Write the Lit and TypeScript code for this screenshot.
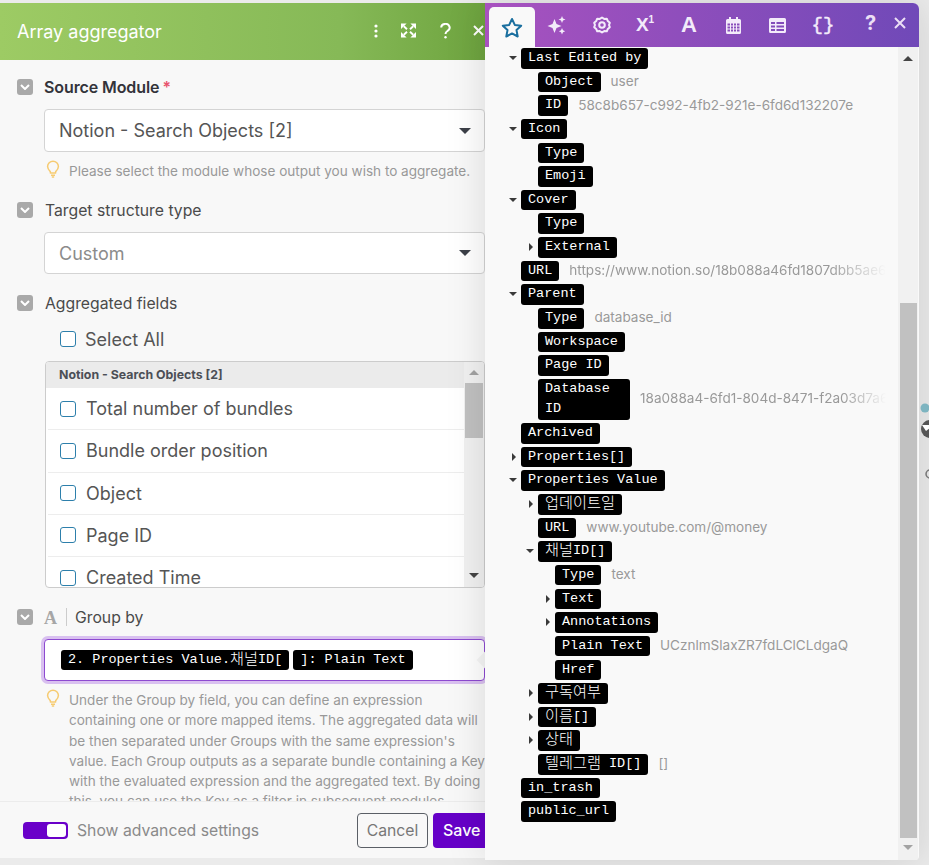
import { LitElement, html, css, nothing } from "lit";
import { customElement } from "lit/decorators.js";

type Node = { l: number; t: string; a?: "d" | "r"; v?: string; fade?: boolean; wrap?: boolean };

const TREE: Node[] = [
  { l: 0, t: "Last Edited by", a: "d" },
  { l: 1, t: "Object", v: "user" },
  { l: 1, t: "ID", v: "58c8b657-c992-4fb2-921e-6fd6d132207e" },
  { l: 0, t: "Icon", a: "d" },
  { l: 1, t: "Type" },
  { l: 1, t: "Emoji" },
  { l: 0, t: "Cover", a: "d" },
  { l: 1, t: "Type" },
  { l: 1, t: "External", a: "r" },
  { l: 0, t: "URL", v: "https://www.notion.so/18b088a46fd1807dbb5ae6f0a1c2d3e4", fade: true },
  { l: 0, t: "Parent", a: "d" },
  { l: 1, t: "Type", v: "database_id" },
  { l: 1, t: "Workspace" },
  { l: 1, t: "Page ID" },
  { l: 1, t: "Database ID", v: "18a088a4-6fd1-804d-8471-f2a03d7a6c1e9b20", fade: true, wrap: true },
  { l: 0, t: "Archived" },
  { l: 0, t: "Properties[]", a: "r" },
  { l: 0, t: "Properties Value", a: "d" },
  { l: 1, t: "업데이트일", a: "r" },
  { l: 1, t: "URL", v: "www.youtube.com/@money" },
  { l: 1, t: "채널ID[]", a: "d" },
  { l: 2, t: "Type", v: "text" },
  { l: 2, t: "Text", a: "r" },
  { l: 2, t: "Annotations", a: "r" },
  { l: 2, t: "Plain Text", v: "UCznlmSlaxZR7fdLClCLdgaQ" },
  { l: 2, t: "Href" },
  { l: 1, t: "구독여부", a: "r" },
  { l: 1, t: "이름[]", a: "r" },
  { l: 1, t: "상태", a: "r" },
  { l: 1, t: "텔레그램 ID[]", v: "[]" },
  { l: 0, t: "in_trash" },
  { l: 0, t: "public_url" },
];

const FIELDS = ["Total number of bundles", "Bundle order position", "Object", "Page ID", "Created Time"];

const chevron = html`<span class="tog"><svg width="10" height="6" viewBox="0 0 10 6"><path d="M1 1l4 4 4-4" fill="none" stroke="#fff" stroke-width="2"/></svg></span>`;
const bulb = html`<svg class="bulb" width="14" height="18" viewBox="0 0 14 18" fill="none" stroke="#f6cb72" stroke-width="1.5"><path d="M4.3 11.6C3 10.4 1.6 9 1.6 6.6a5.4 5.4 0 0 1 10.8 0c0 2.4-1.4 3.8-2.7 5l-.2 1.4H4.500z"/><path d="M5 15.2h4M5.8 17h2.4"/></svg>`;

const pillText = (t: string) =>
  t.split(/([\uAC00-\uD7A3]+)/).map((part, i) => (i % 2 ? html`<span class="ko">${part}</span>` : part));

@customElement("app-root")
export class AppRoot extends LitElement {
  static styles = css`
    :host {
      display: flex;
      position: relative;
      width: 929px;
      height: 865px;
      box-sizing: border-box;
      padding-top: 3px;
      overflow: hidden;
      background: #ebebeb;
      font-family: Inter, "Noto Sans CJK KR", sans-serif;
    }
    .left {
      width: 485px;
      height: 855px;
      flex: none;
      display: flex;
      flex-direction: column;
      overflow: hidden;
      background: #f8f8f8;
    }
    .lhead {
      height: 57px;
      flex: none;
      display: flex;
      align-items: center;
      padding-left: 17px;
      color: #fff;
      font-size: 18px;
      background: linear-gradient(90deg, #9dcb64, #86b957 70%, #6ea43f);
    }
    .lhead .ttl { flex: 1; }
    .lhead svg { flex: none; display: block; margin-top: -2px; }
    .hi1 { margin-right: 23px; }
    .hi2 { margin-right: 24px; }
    .hi3 { margin-right: 22px; }
    .body {
      flex: 1;
      min-height: 0;
      overflow: hidden;
      padding: 17px 0 0 17px;
    }
    .lab {
      display: flex;
      align-items: center;
      height: 20px;
      font-size: 15.75px;
      color: #4a4a4a;
    }
    .tog {
      width: 16px;
      height: 16px;
      flex: none;
      margin-right: 12px;
      border-radius: 3px;
      background: #a9a9a9;
      display: flex;
      align-items: center;
      justify-content: center;
    }
    .strong { font-size: 16px; font-weight: 600; color: #33333a; margin-left: -1px; letter-spacing: -0.1px; }
    .star { color: #e8536d; margin-left: 3px; font-weight: 600; }
    .sel {
      margin: 12px 0 0 27px;
      height: 42px;
      box-sizing: border-box;
      border: 1px solid #d4d4d4;
      border-radius: 4px;
      background: #fff;
      display: flex;
      align-items: center;
      justify-content: space-between;
      padding: 0 14px;
      font-size: 18px;
      color: #555;
    }
    .sel.tall { height: 43px; }
    .sel.muted { color: #8b8b8b; }
    .caret {
      width: 0;
      height: 0;
      border-left: 6px solid transparent;
      border-right: 6px solid transparent;
      border-top: 6px solid #3c4048;
      margin-right: -1px;
    }
    .hint {
      display: flex;
      margin: 8px 0 0 29px;
      font-size: 13.55px;
      line-height: 20.2px;
      color: #999;
    }
    .bulb { flex: none; margin-right: 9px; }
    .hint p { margin: 1px 0 0; width: 416px; flex: none; }
    .m19 { margin-top: 19px; }
    .all {
      display: flex;
      align-items: center;
      height: 26px;
      margin: 13px 0 0 43px;
      font-size: 18px;
      color: #555;
    }
    .cb {
      width: 16px;
      height: 16px;
      flex: none;
      box-sizing: border-box;
      border: 1.5px solid #2d7fab;
      border-radius: 3px;
      background: #fff;
      margin-right: 10px;
    }
    .all .cb { margin-right: 9px; }
    .list {
      margin: 9px 0 0 28px;
      height: 227px;
      box-sizing: border-box;
      border: 1px solid #ccc;
      border-radius: 4px;
      background: #fff;
      display: flex;
      overflow: hidden;
    }
    .lmain { flex: 1; min-width: 0; }
    .lh {
      height: 26px;
      line-height: 26px;
      padding-left: 13px;
      background: #ebebeb;
      font-size: 12.35px;
      font-weight: 700;
      color: #4b4f56;
    }
    .li {
      display: flex;
      align-items: center;
      height: 42.2px;
      box-sizing: border-box;
      margin-left: 2px;
      padding-left: 12px;
      border-bottom: 1px solid #ededed;
      font-size: 18px;
      color: #555;
    }
    .lsb {
      width: 20px;
      flex: none;
      position: relative;
      background: #f1f1f1;
    }
    .lsb-up {
      width: 0;
      height: 0;
      margin: 8px auto 0;
      border-left: 5px solid transparent;
      border-right: 5px solid transparent;
      border-bottom: 5px solid #a3a3a3;
    }
    .lsb-thumb { height: 55px; margin: 8px 1px 0; background: #c1c1c1; }
    .lsb-dn {
      position: absolute;
      left: 5px;
      bottom: 9px;
      width: 0;
      height: 0;
      border-left: 5px solid transparent;
      border-right: 5px solid transparent;
      border-top: 5px solid #444;
    }
    .a-ico {
      font-family: "Liberation Serif", serif;
      font-weight: 700;
      font-size: 18px;
      color: #a6a6a6;
      width: 22px;
      margin-left: -1px;
      margin-top: 2px;
      flex: none;
    }
    .vsep { width: 1px; height: 18px; background: #ccc; margin: 0 8px 0 0; flex: none; }
    .ginput {
      position: relative;
      margin: 12px 0 0 27px;
      height: 42px;
      box-sizing: border-box;
      border: 1px solid #8d4ad0;
      border-radius: 4px;
      box-shadow: 0 0 0 3px #d9c0f0;
      background: #fff;
      display: flex;
      align-items: center;
      gap: 4px;
      padding-left: 16px;
    }
    .notch {
      position: absolute;
      right: -7px;
      top: 14px;
      width: 12px;
      height: 12px;
      transform: rotate(45deg);
      background: #f6f6f6;
    }
    .pill {
      display: inline-block;
      box-sizing: border-box;
      height: 20.5px;
      background: #000;
      color: #fff;
      border-radius: 3px;
      padding: 0 7px;
      line-height: 20.5px;
      font-family: "Liberation Mono", "Noto Sans CJK KR", monospace;
      font-size: 13.5px;
      white-space: pre;
    }
    .ko {
      font-family: "Noto Sans CJK KR", sans-serif;
      font-size: 15.2px;
      font-weight: 300;
      line-height: 0;
      vertical-align: -0.5px;
    }
    .foot {
      height: 56px;
      flex: none;
      display: flex;
      align-items: center;
      border-top: 1px solid #ececec;
      background: #f8f8f8;
      padding-left: 23px;
      font-size: 15.75px;
      color: #8a8a8a;
    }
    .sw {
      width: 45px;
      height: 17px;
      flex: none;
      box-sizing: border-box;
      padding: 2px;
      border-radius: 4px;
      background: #6a00c9;
      margin-right: 9px;
      display: flex;
      justify-content: flex-end;
    }
    .sw i { display: block; width: 19px; height: 13px; background: #fff; border-radius: 3px; }
    .cancel {
      margin-left: auto;
      width: 71px;
      height: 35px;
      box-sizing: border-box;
      border: 1px solid #5a5f66;
      border-radius: 4px;
      display: flex;
      align-items: center;
      justify-content: center;
      color: #777;
    }
    .save {
      margin-left: 5px;
      margin-right: -8px;
      width: 60px;
      height: 35px;
      flex: none;
      box-sizing: border-box;
      padding-left: 10px;
      border-radius: 4px;
      background: #6600c8;
      color: #fff;
      display: flex;
      align-items: center;
      font-size: 16px;
      font-weight: 500;
    }
    .right {
      position: relative;
      width: 434px;
      height: 857px;
      flex: none;
      display: flex;
      flex-direction: column;
      background: #f9f9f9;
      border-radius: 0 6px 4px 0;
      box-shadow: 0 0 40px rgba(0, 0, 0, 0.13);
      overflow: hidden;
    }
    .rhead {
      height: 44px;
      flex: none;
      position: relative;
      display: flex;
      align-items: center;
      box-sizing: border-box;
      padding-left: 4px;
      background: linear-gradient(90deg, #a852bf, #7049b8);
      color: #f3ebfa;
    }
    .tab {
      width: 46px;
      height: 40px;
      margin-top: 4px;
      border-radius: 5px 5px 0 0;
      background: #f9f9f9;
      display: flex;
      align-items: center;
      justify-content: center;
      flex: none;
    }
    .ti {
      width: 44px;
      height: 44px;
      flex: none;
      display: flex;
      align-items: center;
      justify-content: center;
    }
    .ti.gear { padding-left: 2px; box-sizing: border-box; }
    .t-x { font: 700 19px "Liberation Sans", sans-serif; }
    .t-x sup { font-size: 10px; line-height: 0; vertical-align: 8px; }
    .t-a { font: 700 22px "Liberation Sans", sans-serif; }
    .t-b { font: 400 19px "Liberation Mono", monospace; margin-left: 2px; -webkit-text-stroke: 0.5px currentColor; }
    .t-q { font: 700 20px Inter, sans-serif; margin-top: -5px; width: 45px; margin-left: 3px; color: #ebdff5; }
    .t-c { width: 14px; margin-top: -5px; margin-left: 1px; }
    .rbody { flex: 1; min-height: 0; display: flex; }
    .tree {
      flex: 1;
      min-width: 0;
      display: flex;
      flex-direction: column;
      gap: 3.15px;
      padding: 1px 12px 0 36px;
    }
    .row { position: relative; display: flex; align-items: center; flex: none; }
    .l1 { margin-left: 17px; }
    .l2 { margin-left: 34px; }
    .arr { position: absolute; left: -12px; top: 8px; width: 0; height: 0; }
    .arr.d {
      border-left: 4px solid transparent;
      border-right: 4px solid transparent;
      border-top: 4px solid #3a3a3a;
      left: -12px;
    }
    .arr.r {
      border-top: 4px solid transparent;
      border-bottom: 4px solid transparent;
      border-left: 4px solid #3a3a3a;
      top: 6px;
      left: -9px;
    }
    .pill.wrap { width: 92px; height: auto; white-space: normal; }
    .val {
      margin: 0 0 2px 10px;
      font-size: 13.55px;
      color: #999;
      white-space: nowrap;
    }
    .val.fade {
      flex: 1;
      min-width: 0;
      overflow: hidden;
      -webkit-mask-image: linear-gradient(90deg, #000 82%, transparent 100%);
      mask-image: linear-gradient(90deg, #000 82%, transparent 100%);
    }
    .rsb {
      width: 20px;
      flex: none;
      margin-right: 1px;
      display: flex;
      flex-direction: column;
      align-items: center;
      background: #f1f1f1;
    }
    .rsb-up {
      width: 0;
      height: 0;
      margin-top: 9px;
      border-left: 5px solid transparent;
      border-right: 5px solid transparent;
      border-bottom: 5px solid #444;
    }
    .rsb-sp { height: 242px; flex: none; }
    .rsb-thumb { width: 17px; height: 535px; background: #c1c1c1; }
    .rsb-dn {
      width: 0;
      height: 0;
      margin-top: 7px;
      border-left: 5px solid transparent;
      border-right: 5px solid transparent;
      border-top: 5px solid #a3a3a3;
    }
    .bg-deco { position: absolute; left: 919px; top: 400px; display: block; }
  `;

  render() {
    return html`
      <section class="left">
        <header class="lhead">
          <span class="ttl">Array aggregator</span>
          <svg class="hi1" width="4" height="14" viewBox="0 0 4 14" fill="#fff"><circle cx="2" cy="2" r="1.6"/><circle cx="2" cy="7" r="1.6"/><circle cx="2" cy="12" r="1.6"/></svg>
          <svg class="hi2" width="15" height="15" viewBox="0 0 16 15" fill="none" stroke="#fff" stroke-width="2"><path d="M3 3l3.400 3.200M13 3L9.600 6.200M3 12l3.400-3.200M13 12L9.600 8.800"/><path fill="#fff" stroke="none" d="M0 0h6L0 6zM16 0h-6l6 6zM0 15h6l-6-6zM16 15h-6l6-6z"/></svg>
          <svg class="hi3" width="11" height="16" viewBox="0 0 11 16" fill="none" stroke="#fff" stroke-width="2"><path d="M1.200 4.600A4.200 3.800 0 1 1 7.400 8c-1.400.8-1.900 1.400-1.900 3"/><circle cx="5.500" cy="14.200" r="1.200" fill="#fff" stroke="none"/></svg>
          <svg width="11" height="11" viewBox="0 0 11 11" stroke="#fff" stroke-width="2"><path d="M1 1l9 9M10 1l-9 9"/></svg>
          <span style="width:1px;flex:none"></span>
        </header>
        <div class="body">
          <div class="lab">${chevron}<span class="strong">Source Module</span><span class="star">*</span></div>
          <div class="sel tall"><span>Notion - Search Objects [2]</span><span class="caret"></span></div>
          <div class="hint">${bulb}<p>Please select the module whose output you wish to aggregate.</p></div>
          <div class="lab m19">${chevron}<span>Target structure type</span></div>
          <div class="sel muted"><span>Custom</span><span class="caret"></span></div>
          <div class="lab m19">${chevron}<span>Aggregated fields</span></div>
          <div class="all"><span class="cb"></span>Select All</div>
          <div class="list">
            <div class="lmain">
              <div class="lh">Notion - Search Objects [2]</div>
              ${FIELDS.map((f) => html`<div class="li"><span class="cb"></span>${f}</div>`)}
            </div>
            <div class="lsb">
              <div class="lsb-up"></div>
              <div class="lsb-thumb"></div>
              <div class="lsb-dn"></div>
            </div>
          </div>
          <div class="lab m19">${chevron}<span class="a-ico">A</span><span class="vsep"></span><span>Group by</span></div>
          <div class="ginput">
            <span class="pill">${pillText("2. Properties Value.채널ID[")}</span>
            <span class="pill">]: Plain Text</span>
            <span class="notch"></span>
          </div>
          <div class="hint">${bulb}<p>Under the Group by field, you can define an expression containing one or more mapped items. The aggregated data will be then separated under Groups with the same expression's value. Each Group outputs as a separate bundle containing a Key with the evaluated expression and the aggregated text. By doing this, you can use the Key as a filter in subsequent modules.</p></div>
        </div>
        <footer class="foot">
          <span class="sw"><i></i></span>
          <span>Show advanced settings</span>
          <span class="cancel">Cancel</span>
          <span class="save">Save</span>
        </footer>
      </section>
      <section class="right">
        <header class="rhead">
          <div class="tab">
            <svg width="22" height="21" viewBox="0 0 22 21" fill="none" stroke="#1a6f9f" stroke-width="2" stroke-linejoin="round"><path d="M11 2l2.800 5.900 6.400.8-4.700 4.400 1.200 6.400L11 16.400l-5.700 3.100 1.200-6.400L1.800 8.700l6.400-.8z"/></svg>
          </div>
          <div class="ti">
            <svg width="20" height="20" viewBox="0 0 20 20" fill="currentColor"><path d="M7.500 4l2 5 5 2-5 2-2 5-2-5-5-2 5-2zM15 1l1 2.500 2.500 1-2.500 1-1 2.500-1-2.500-2.500-1 2.500-1zM15 13l1 2.200 2.200 1-2.200 1-1 2.200-1-2.200-2.200-1 2.200-1z"/></svg>
          </div>
          <div class="ti gear">
            <svg width="18" height="18" viewBox="0 0 18 18" fill="none" stroke="currentColor" stroke-width="2"><path d="M9 1.500l2.200 1.400 2.600-.2 1 2.400 2 1.700-.8 2.200.8 2.200-2 1.700-1 2.400-2.600-.2L9 16.500l-2.200-1.400-2.600.2-1-2.400-2-1.700.8-2.200-.8-2.200 2-1.700 1-2.400 2.600.2z" stroke-linejoin="round"/><circle cx="9" cy="9" r="2.800"/></svg>
          </div>
          <div class="ti t-x"><span>X<sup>1</sup></span></div>
          <div class="ti t-a">A</div>
          <div class="ti">
            <svg width="15" height="17" viewBox="0 0 15 17" fill="currentColor"><path fill-rule="evenodd" d="M3 0h2v2h5V0h2v2h1.500A1.500 1.500 0 0 1 15 3.500v12a1.500 1.500 0 0 1-1.500 1.500h-12A1.500 1.500 0 0 1 0 15.500v-12A1.500 1.500 0 0 1 1.500 2H3zM1.500 6.500v2h2.500v-2zm3.500 0v2h2v-2zm3 0v2h2v-2zm3 0v2h2.500v-2zm-9.500 3v2h2.500v-2zm3.500 0v2h2v-2zm3 0v2h2v-2zm3 0v2h2.500v-2zm-9.500 3v2h2.500v-2zm3.500 0v2h2v-2zm3 0v2h2v-2zm3 0v2h2.500v-2z"/></svg>
          </div>
          <div class="ti">
            <svg width="17" height="15" viewBox="0 0 17 15" fill="currentColor"><path fill-rule="evenodd" d="M1.500 0h14A1.500 1.500 0 0 1 17 1.500v12a1.500 1.500 0 0 1-1.500 1.500h-14A1.500 1.500 0 0 1 0 13.500v-12A1.500 1.500 0 0 1 1.500 0zM2 4v2h4V4zm5.500 0v2H15V4zM2 7.500v2h4v-2zm5.500 0v2H15v-2zM2 11v2h4v-2zm5.500 0v2H15v-2z"/></svg>
          </div>
          <div class="ti t-b">{}</div>
          <div class="ti t-q">?</div>
          <div class="t-c">
            <svg width="12" height="12" viewBox="0 0 12 12" stroke="#ecdff5" stroke-width="2"><path d="M1 1l10 10M11 1L1 11"/></svg>
          </div>
        </header>
        <div class="rbody">
          <div class="tree">
            ${TREE.map(
              (n) => html`<div class="row ${n.l === 1 ? "l1" : n.l === 2 ? "l2" : ""}">
                ${n.a ? html`<span class="arr ${n.a}"></span>` : nothing}
                <span class="pill ${n.wrap ? "wrap" : ""}">${pillText(n.t)}</span>
                ${n.v ? html`<span class="val ${n.fade ? "fade" : ""}">${n.v}</span>` : nothing}
              </div>`
            )}
          </div>
          <div class="rsb">
            <div class="rsb-up"></div>
            <div class="rsb-sp"></div>
            <div class="rsb-thumb"></div>
            <div class="rsb-dn"></div>
          </div>
        </div>
      </section>
      <svg class="bg-deco" width="10" height="80" viewBox="0 0 10 80">
        <circle cx="6" cy="8" r="4.500" fill="#7db4c0"/>
        <circle cx="11" cy="29" r="9" fill="#555"/>
        <path d="M3 25h8v3l-4 3z" fill="#fff"/>
        <path d="M11 70a4 4 0 0 0 0 8" fill="none" stroke="#777" stroke-width="1.500"/>
      </svg>
    `;
  }
}
